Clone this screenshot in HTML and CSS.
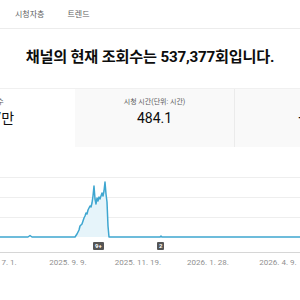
FILE: index.html
```html
<!DOCTYPE html>
<html lang="ko">
  <head>
    <meta charset="UTF-8" />
    <meta name="viewport" content="width=device-width, initial-scale=1.0" />
    <title>채널 분석</title>
    <link rel="stylesheet" href="styles.css">
  </head>
  <body>
    <nav class="tabs">
      <span class="tab">시청자층</span>
      <span class="tab">트렌드</span>
    </nav>

    <h1 class="headline">채널의 현재 조회수는 537,377회입니다.</h1>

    <div class="cards">
      <div class="card selected">
        <p class="card-label">조회수</p>
        <p class="card-value">53.7만</p>
      </div>
      <div class="card">
        <p class="card-label">시청 시간(단위: 시간)</p>
        <p class="card-value">484.1</p>
      </div>
      <div class="card">
        <p class="card-label">구독자</p>
        <p class="card-value">+12</p>
      </div>
    </div>

    <div class="chart">
      <svg class="plot" width="300" height="80" viewBox="0 0 300 80">
        <line class="grid" x1="0" y1="17.5" x2="300" y2="17.5" />
        <line class="grid" x1="0" y1="37.5" x2="300" y2="37.5" />
        <line class="grid" x1="0" y1="57.5" x2="300" y2="57.5" />
        <path
          class="area"
          d="M75,77 L77,74 L79,70 L80,66 L82,64 L83,61 L84,58 L85,56 L86,53 L87,54 L88,50 L89,48 L90,46 L91,47 L92,43 L93,36 L94,26 L95,39 L96,44 L97,38 L98,41 L99,37 L100,39 L101,36 L102,33 L103,36 L104,31 L105,22 L106,34 L107,42 L108,66 L109,77 Z"
        />
        <path
          class="line"
          d="M0,77 L28,77 L30,75.5 L32,77 L75,77 L77,74 L79,70 L80,66 L82,64 L83,61 L84,58 L85,56 L86,53 L87,54 L88,50 L89,48 L90,46 L91,47 L92,43 L93,36 L94,26 L95,39 L96,44 L97,38 L98,41 L99,37 L100,39 L101,36 L102,33 L103,36 L104,31 L105,22 L106,34 L107,42 L108,66 L109,77 L160,77 L161,76 L162,77 L300,77"
        />
      </svg>
      <div class="markers">
        <span class="badge" style="left: 93px">9+</span>
        <span class="badge" style="left: 157px">2</span>
      </div>
      <div class="axis">
        <span>2025. 7. 1.</span>
        <span>2025. 9. 9.</span>
        <span>2025. 11. 19.</span>
        <span>2026. 1. 28.</span>
        <span>2026. 4. 9.</span>
      </div>
    </div>
  </body>
</html>
```

FILE: styles.css
```css
* {
  box-sizing: border-box;
  margin: 0;
  padding: 0;
}

body {
  font-family: Roboto, "Noto Sans CJK KR", sans-serif;
  background-color: #ffffff;
  color: #0d0d0d;
  overflow: hidden;
}

.tabs {
  display: flex;
  gap: 23px;
  height: 29px;
  padding: 10px 0 0 15px;
  border-bottom: 1px solid #ececec;
}

.tab {
  font-size: 8px;
  line-height: 10px;
  color: #606060;
}

.headline {
  margin: 16px 0 19px;
  font-size: 15.2px;
  line-height: 24px;
  font-weight: 700;
  text-align: center;
  letter-spacing: -0.2px;
}

.cards {
  display: flex;
  height: 59px;
  margin-left: -87px;
  border-top: 1px solid #f0f0f0;
}

.card {
  flex: 0 0 160px;
  padding-top: 7px;
  text-align: center;
  background-color: #f9f9f9;
  border-right: 1px solid #ebebeb;
}

.card.selected {
  flex-basis: 162px;
  background-color: #ffffff;
  border-right: none;
}

.card:last-child {
  padding-right: 9px;
}

.card-label {
  font-size: 7px;
  line-height: 12px;
  color: #606060;
}

.card-value {
  font-size: 14px;
  line-height: 20px;
  color: #0d0d0d;
}

.chart {
  margin-top: 13px;
}

.plot {
  display: block;
}

.grid {
  stroke: #eeeeee;
  stroke-width: 1;
}

.area {
  fill: #e6f4fa;
}

.line {
  fill: none;
  stroke: #3ea6d0;
  stroke-width: 1.5;
  stroke-linejoin: round;
}

.markers {
  position: relative;
  height: 13px;
  border-bottom: 1px solid #d6d6d6;
}

.badge {
  position: absolute;
  top: 2px;
  height: 8px;
  padding: 0 2px;
  font-size: 6px;
  line-height: 8px;
  font-weight: 700;
  color: #ffffff;
  background-color: #555555;
  border-radius: 1px;
}

.axis {
  display: flex;
  margin-left: -37px;
  padding-top: 5px;
}

.axis span {
  flex: 0 0 70px;
  font-size: 8px;
  line-height: 10px;
  text-align: center;
  color: #909090;
}
```
